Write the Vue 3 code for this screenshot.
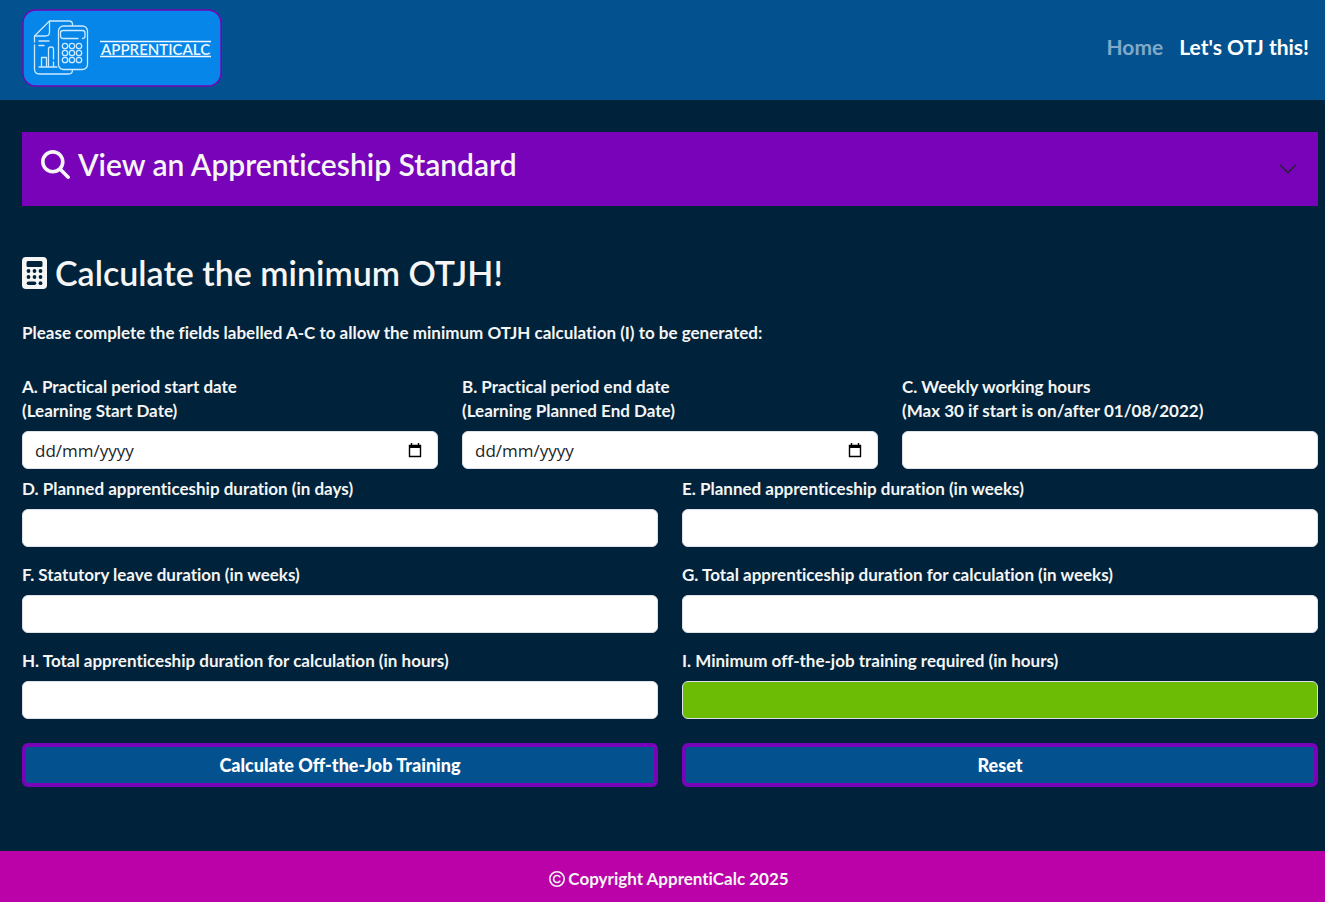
<script setup>
import { reactive } from 'vue'

const values = reactive({})

const rows = [
  {
    kind: 'thirds',
    fields: [
      { id: 'start', label: 'A. Practical period start date', note: '(Learning Start Date)', date: true },
      { id: 'end', label: 'B. Practical period end date', note: '(Learning Planned End Date)', date: true },
      { id: 'weekly', label: 'C. Weekly working hours', note: '(Max 30 if start is on/after 01/08/2022)' }
    ]
  },
  {
    kind: 'halves',
    fields: [
      { id: 'days', label: 'D. Planned apprenticeship duration (in days)' },
      { id: 'weeks', label: 'E. Planned apprenticeship duration (in weeks)' },
      { id: 'leave', label: 'F. Statutory leave duration (in weeks)' },
      { id: 'totalWeeks', label: 'G. Total apprenticeship duration for calculation (in weeks)' },
      { id: 'totalHours', label: 'H. Total apprenticeship duration for calculation (in hours)' },
      { id: 'minimum', label: 'I. Minimum off-the-job training required (in hours)', result: true }
    ]
  }
]

const keyColumns = [43, 50, 57]
const keyRows = [37, 44, 51]

function reset() {
  Object.keys(values).forEach((key) => { values[key] = '' })
}
</script>

<template>
  <div class="page">
    <header class="topbar">
      <a href="#" class="brand" aria-label="ApprentiCalc">
        <svg class="logo" viewBox="0 0 200 78" role="img" aria-label="ApprentiCalc">
          <rect x="1" y="1" width="198" height="76" rx="13" fill="#0586e8" stroke="#7603b8" stroke-width="1.4" />
          <g fill="none" stroke="#cbe9ff" stroke-width="1.3" stroke-linecap="round" stroke-linejoin="round">
            <path d="M50.500 16.500v-1q0-3.500-3.500-3.500H27.500L12.500 27v6M12.500 36v24q0 5 5 5h29q4 0 4-4" />
            <path d="M27.500 12.500V23q0 4-4 4H13M17 32h10M17 36.500h5" />
            <path d="M17 58h18M19.500 58v-9.500h5V58M26.500 58V40q0-2 2.500-2t2.500 2v10M31.500 53v5" />
            <rect x="36.500" y="17" width="29" height="43.500" rx="5" />
            <path d="M56 29.500H41q-2.500 0-2.500-2.500v-3q0-2.500 2.500-2.500h19.500q2.500 0 2.500 2.500v3q0 2.500-2.500 2.500" />
            <template v-for="y in keyRows" :key="y">
              <circle v-for="x in keyColumns" :key="x" :cx="x" :cy="y" r="2.700" />
            </template>
          </g>
          <path d="M78 32.500h111M78 47.500h111" stroke="#eef8ff" stroke-width="1.600" />
          <text x="79" y="45.500" class="logo-text">APPRENTICALC</text>
        </svg>
      </a>
      <nav class="links">
        <a href="#" class="muted">Home</a>
        <a href="#">Let's OTJ this!</a>
      </nav>
    </header>

    <main class="content">
      <h2 class="accordion">
        <button type="button" class="accordion-button">
          <svg class="search" viewBox="0 0 512 512" aria-hidden="true">
            <path fill="currentColor" d="M416 208c0 45.900-14.900 88.300-40 122.700l126.600 126.700c12.500 12.500 12.500 32.800 0 45.300s-32.800 12.500-45.300 0L330.700 376C296.300 401.200 253.900 416 208 416 93.100 416 0 322.900 0 208S93.100 0 208 0s208 93.100 208 208zM208 352a144 144 0 1 0 0-288 144 144 0 1 0 0 288z" />
          </svg>
          <span class="accordion-title">View an Apprenticeship Standard</span>
          <svg class="chevron" viewBox="0 0 16 16" aria-hidden="true">
            <path d="M2 5l6 6 6-6" fill="none" stroke="#212529" stroke-linecap="round" stroke-linejoin="round" />
          </svg>
        </button>
      </h2>

      <h1 class="title">
        <svg class="calculator" viewBox="0 0 25 32" aria-hidden="true">
          <path fill="currentColor" fill-rule="evenodd" d="M4 0h17q4 0 4 4v24q0 4-4 4H4q-4 0-4-4V4q0-4 4-4zM6 4Q4.500 4 4.500 5.500v3Q4.500 10 6 10h13q1.500 0 1.500-1.500v-3Q20.500 4 19 4z" />
          <g fill="#00233b">
            <circle cx="6.500" cy="14" r="1.900" /><circle cx="12.500" cy="14" r="1.900" /><circle cx="18.500" cy="14" r="1.900" />
            <circle cx="6.500" cy="20" r="1.900" /><circle cx="12.500" cy="20" r="1.900" /><circle cx="18.500" cy="20" r="1.900" />
            <rect x="4.700" y="24.400" width="9.600" height="3.600" rx="1.800" /><circle cx="18.500" cy="26.200" r="1.900" />
          </g>
        </svg>
        <span>Calculate the minimum OTJH!</span>
      </h1>

      <p class="intro">Please complete the fields labelled A-C to allow the minimum OTJH calculation (I) to be generated:</p>

      <form class="form" @submit.prevent>
        <div v-for="row in rows" :key="row.kind" class="row" :class="row.kind">
          <div v-for="field in row.fields" :key="field.id" class="field">
            <label :for="field.id">{{ field.label }}<template v-if="field.note"><br>{{ field.note }}</template></label>
            <div class="control">
              <input
                :id="field.id"
                v-model="values[field.id]"
                type="text"
                :placeholder="field.date ? 'dd/mm/yyyy' : ''"
                :class="{ result: field.result }"
              >
              <button v-if="field.date" type="button" class="picker" aria-label="Choose date">
                <svg viewBox="0 0 14 15" aria-hidden="true">
                  <path d="M1.500 2.500h11v11h-11zM3.500 0v3M10.500 0v3" fill="none" stroke="#000" stroke-width="1.400" />
                  <path d="M1 2h12v3H1z" />
                </svg>
              </button>
            </div>
          </div>
        </div>
        <div class="actions">
          <button type="submit">Calculate Off-the-Job Training</button>
          <button type="button" @click="reset">Reset</button>
        </div>
      </form>
    </main>

    <footer class="footer">
      <svg viewBox="0 0 16 16" aria-hidden="true">
        <g fill="none" stroke="currentColor" stroke-width="1.600">
          <circle cx="8" cy="8" r="7.200" />
          <path d="M10.800 5.800a3.500 3.500 0 1 0 0 4.400" stroke-linecap="round" />
        </g>
      </svg>
      <span>Copyright ApprentiCalc 2025</span>
    </footer>
  </div>
</template>

<style>
body {
  margin: 0;
  background: #00233b;
}
</style>

<style scoped>
.page {
  min-height: 100vh;
  display: flex;
  flex-direction: column;
  color: #f5f5f5;
  font: 700 17px/24px Lato, "Open Sans", sans-serif;
  font-variant-ligatures: none;
}

.page *,
.page {
  box-sizing: border-box;
}

.topbar {
  height: 100px;
  padding: 0 16px 0 22px;
  display: flex;
  align-items: center;
  justify-content: space-between;
  background: #03528f;
}

.brand,
.logo {
  display: block;
}

.brand {
  padding-bottom: 4px;
}

.logo {
  width: 200px;
  height: 78px;
}

.logo-text {
  font: 600 15px Lato, sans-serif;
  fill: #eef8ff;
}

.links {
  display: flex;
  gap: 16px;
  font-size: 21px;
  line-height: 30px;
  padding-bottom: 6px;
}

.links a {
  color: #fff;
  text-decoration: none;
}

.links .muted {
  color: #81a9c7;
}

.content {
  flex: 1;
  padding: 32px 7px 64px 22px;
}

.accordion {
  margin: 0;
}

.accordion-button {
  width: 100%;
  height: 74px;
  padding: 0 20px 0 19px;
  display: flex;
  align-items: center;
  gap: 8px;
  border: 0;
  background: #7803b9;
  color: #f5f5f5;
  font: 600 30px/36px Lato, sans-serif;
  font-variant-ligatures: none;
  text-align: left;
}

.accordion-title {
  flex: 1;
  padding-bottom: 10px;
}

.search {
  width: 29px;
  height: 29px;
  margin-bottom: 10px;
}

.chevron {
  width: 20px;
  height: 20px;
}

.title {
  margin: 47px 0 28px;
  display: flex;
  align-items: center;
  gap: 8px;
  font: 600 34px/40px Lato, sans-serif;
  font-variant-ligatures: none;
}

.calculator {
  width: 25px;
  height: 32px;
}

.intro {
  margin: 0 0 30px;
}

.form {
  display: flex;
  flex-direction: column;
  gap: 8px;
}

.row,
.actions {
  display: grid;
  column-gap: 24px;
  row-gap: 16px;
}

.thirds {
  grid-template-columns: repeat(3, 1fr);
}

.halves,
.actions {
  grid-template-columns: repeat(2, 1fr);
}

.field {
  display: flex;
  flex-direction: column;
  gap: 8px;
}

.control {
  position: relative;
}

.field input {
  display: block;
  width: 100%;
  height: 38px;
  padding: 6px 12px;
  border: 1px solid #dee2e6;
  border-radius: 6px;
  background: #fff;
  color: #212529;
  font: 400 17px/24px "Open Sans", sans-serif;
}

.field input::placeholder {
  color: #212529;
  opacity: 1;
}

.field input.result {
  background: #6cbc05;
}

.picker {
  position: absolute;
  top: 7px;
  right: 12px;
  width: 22px;
  height: 24px;
  padding: 4px;
  border: 0;
  background: none;
}

.picker svg {
  display: block;
  width: 14px;
  height: 15px;
}

.actions {
  margin-top: 16px;
}

.actions button {
  height: 44px;
  border: 4px solid #7803b9;
  border-radius: 6px;
  background: #03528f;
  color: #fff;
  font: 900 18px/24px Lato, sans-serif;
}

.footer {
  min-height: 51px;
  padding: 4px 7px 0 20px;
  display: flex;
  align-items: center;
  justify-content: center;
  gap: 3px;
  background: #ba02a8;
}

.footer svg {
  width: 16px;
  height: 16px;
}
</style>
